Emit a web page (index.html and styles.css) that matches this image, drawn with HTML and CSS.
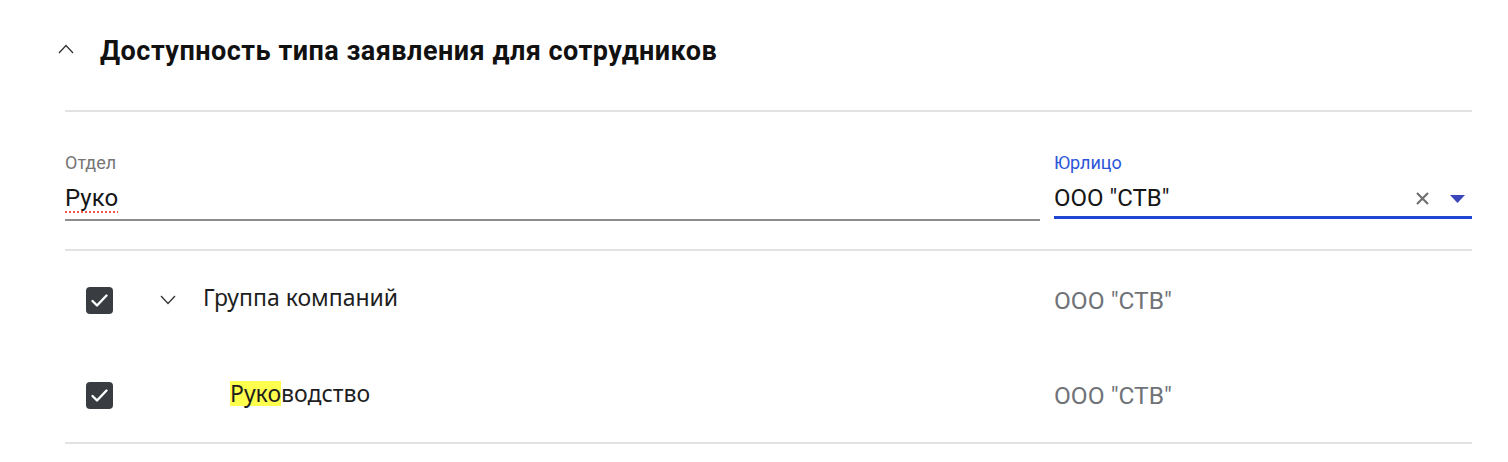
FILE: index.html
```html
<!DOCTYPE html>
<html lang="ru">

<head>
    <meta charset="UTF-8">
    <title>Доступность типа заявления</title>
    <link rel="stylesheet" href="styles.css">
</head>

<body>

    <section class="panel">
        <div class="panel-header">
            <svg class="chevron" width="16" height="10" viewBox="0 0 16 10">
                <path d="M1 9 L8 1.5 L15 9" fill="none" stroke="#333" stroke-width="1.3" />
            </svg>
            <h2 class="panel-title">Доступность типа заявления для сотрудников</h2>
        </div>

        <div class="panel-body">
            <div class="filters">
                <div class="field">
                    <div class="field-label">Отдел</div>
                    <div class="field-input"><span class="typo">Руко</span></div>
                </div>
                <div class="field field-active">
                    <div class="field-label">Юрлицо</div>
                    <div class="field-input">
                        <span class="field-value">ООО "СТВ"</span>
                        <svg class="clear-icon" width="15" height="15" viewBox="0 0 15 15">
                            <path d="M2 2 L13 13 M13 2 L2 13" stroke="#707070" stroke-width="2.2" />
                        </svg>
                        <svg class="caret-icon" width="15" height="8" viewBox="0 0 15 8">
                            <path d="M0 0 H15 L7.5 8 Z" fill="#3a47ba" />
                        </svg>
                    </div>
                </div>
            </div>

            <div class="tree">
                <div class="tree-row">
                    <div class="tree-main">
                        <span class="checkbox">
                            <svg width="27" height="27" viewBox="0 0 27 27">
                                <path d="M6.5 14 L11 18.5 L20.5 8.5" fill="none" stroke="#fff" stroke-width="2.4" stroke-linecap="round" stroke-linejoin="round" />
                            </svg>
                        </span>
                        <span class="toggle">
                            <svg width="16" height="10" viewBox="0 0 16 10">
                                <path d="M1 1 L8 8.5 L15 1" fill="none" stroke="#333" stroke-width="1.3" />
                            </svg>
                        </span>
                        <span class="tree-name">Группа компаний</span>
                    </div>
                    <div class="tree-company">ООО "СТВ"</div>
                </div>
                <div class="tree-row">
                    <div class="tree-main">
                        <span class="checkbox">
                            <svg width="27" height="27" viewBox="0 0 27 27">
                                <path d="M6.5 14 L11 18.5 L20.5 8.5" fill="none" stroke="#fff" stroke-width="2.4" stroke-linecap="round" stroke-linejoin="round" />
                            </svg>
                        </span>
                        <span class="tree-name level-1"><mark class="match">Руко</mark>водство</span>
                    </div>
                    <div class="tree-company">ООО "СТВ"</div>
                </div>
            </div>
        </div>
    </section>

</body>

</html>
```

FILE: styles.css
```css
body {
    margin: 0;
    background: #fff;
    font-family: Roboto, 'Liberation Sans', sans-serif;
    color: #1a1a1a;
}

.panel {
    padding: 0 36px 0 58px;
}

/* Header */
.panel-header {
    display: flex;
    align-items: center;
    height: 110px;
    padding-bottom: 8px;
    box-sizing: border-box;
}

.chevron {
    margin-right: 26px;
    margin-top: -5px;
}

.panel-title {
    margin: 0;
    font-family: Roboto, 'Liberation Sans', sans-serif;
    font-size: 27px;
    font-weight: bold;
    letter-spacing: 0.5px;
    color: #111;
}

.panel-body {
    margin-left: 7px;
    border-top: 2px solid #e2e2e2;
}

/* Filters */
.filters {
    display: grid;
    grid-template-columns: 1fr 418px;
    gap: 14px;
    align-items: start;
    padding: 41px 0 28px;
    border-bottom: 2px solid #e2e2e2;
}

.field-label {
    font-size: 18px;
    line-height: 20px;
    color: #767676;
}

.field-input {
    display: flex;
    align-items: center;
    margin-top: 10px;
    height: 30px;
    padding-bottom: 6px;
    font-size: 24px;
    line-height: 30px;
    color: #161616;
    border-bottom: 2px solid #8d8d8d;
}

.typo {
    text-decoration: underline dotted #f0544b;
    text-decoration-thickness: 2px;
    text-underline-offset: 5px;
}

.field-active .field-label {
    color: #2d55d8;
}

.field-active .field-input {
    padding-bottom: 3px;
    border-bottom: 3px solid #1e46d3;
}

.field-value {
    flex: 1;
}

.clear-icon {
    margin-right: 20px;
}

.caret-icon {
    margin-right: 7px;
    margin-top: 2px;
}

/* Tree rows */
.tree {
    border-bottom: 2px solid #e2e2e2;
}

.tree-row {
    display: grid;
    grid-template-columns: 1fr 418px;
    gap: 14px;
    align-items: center;
    height: 95.5px;
    padding-top: 3px;
    box-sizing: border-box;
}

.tree-main {
    display: flex;
    align-items: center;
    padding-left: 21px;
}

.checkbox {
    display: flex;
    width: 27px;
    height: 27px;
    border-radius: 4px;
    background: #393c41;
}

.toggle {
    display: flex;
    margin-left: 47px;
    margin-right: 27px;
}

.tree-name {
    font-family: 'Noto Sans', sans-serif;
    font-size: 23px;
    color: #1e1e1e;
    padding-bottom: 6px;
}

.level-1 {
    margin-left: 117px;
}

.match {
    display: inline-block;
    line-height: 25px;
    background: #ffff4d;
    color: inherit;
}

.tree-company {
    font-size: 24.5px;
    color: #6f7378;
}
```
